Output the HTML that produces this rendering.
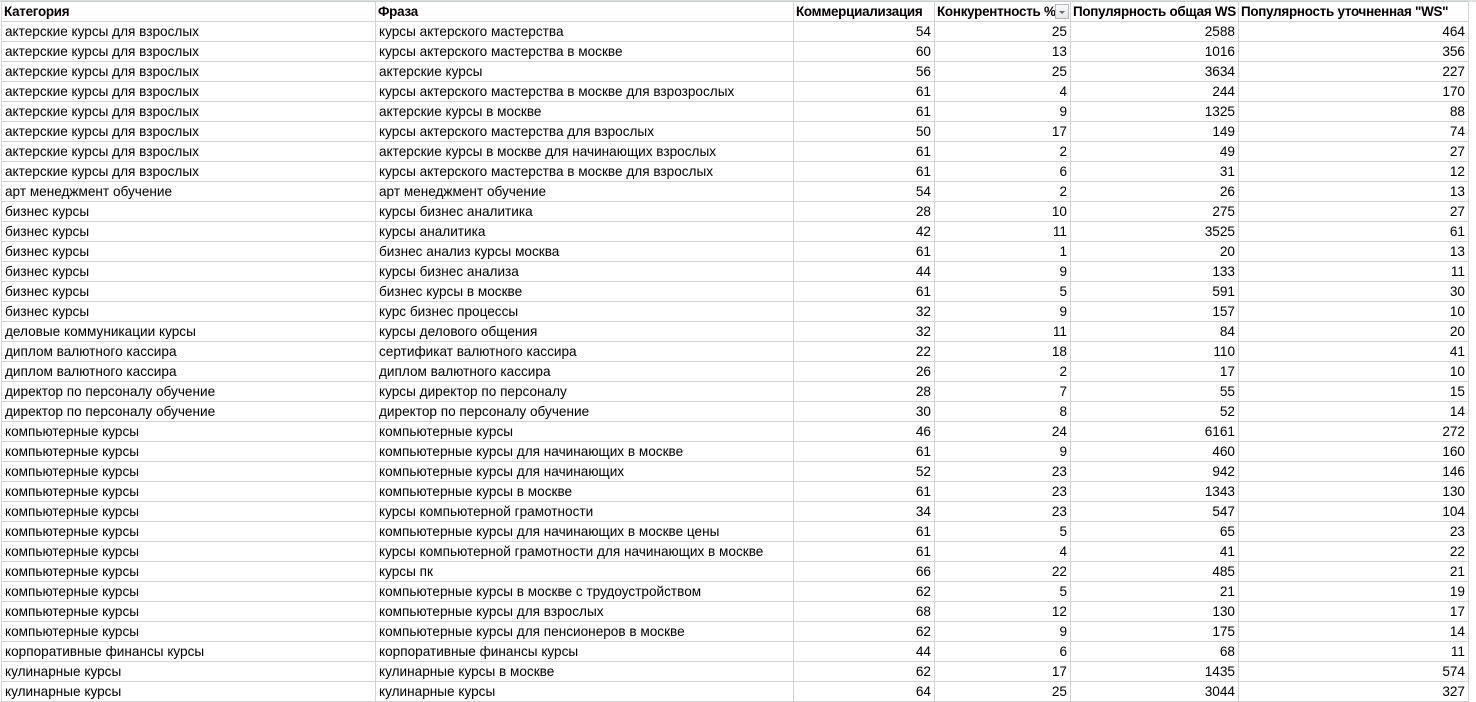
<!DOCTYPE html>
<html><head><meta charset="utf-8"><style>
body{margin:0;background:#fff;width:1476px;height:699px;overflow:hidden;position:relative;font-family:"Liberation Sans",Arial,sans-serif;font-size:13.6px;color:#000}
.top{position:absolute;left:0;top:0;width:1476px;height:2px;background:#dde1e6}
table{position:absolute;left:1px;top:1px;border-collapse:collapse;table-layout:fixed;width:1467px}
td{border:1px solid #d4d4d4;height:19px;padding:0 3px;white-space:nowrap;overflow:hidden;line-height:19px}
tr:first-child td{font-weight:bold;font-size:13.4px;letter-spacing:-0.25px;border-top-color:#c9cdd3;position:relative;padding:0 2px}
td.n{text-align:right}
.dd{position:absolute;right:1px;top:2px;width:14px;height:15px;border:1px solid #b8bcc2;background:linear-gradient(#fafafa,#e4e6ea);box-sizing:border-box}
.dd:after{content:"";position:absolute;left:3px;top:6px;border-left:3px solid transparent;border-right:3px solid transparent;border-top:3px solid #666}
</style></head><body>
<div class="top"></div>
<table>
<colgroup><col style="width:374px"><col style="width:418px"><col style="width:141px"><col style="width:136px"><col style="width:168px"><col style="width:230px"></colgroup>
<tr><td>Категория</td><td>Фраза</td><td>Коммерциализация</td><td>Конкурентность %<span class="dd"></span></td><td>Популярность общая WS</td><td>Популярность уточненная "WS"</td></tr>
<tr><td>актерские курсы для взрослых</td><td>курсы актерского мастерства</td><td class="n">54</td><td class="n">25</td><td class="n">2588</td><td class="n">464</td></tr>
<tr><td>актерские курсы для взрослых</td><td>курсы актерского мастерства в москве</td><td class="n">60</td><td class="n">13</td><td class="n">1016</td><td class="n">356</td></tr>
<tr><td>актерские курсы для взрослых</td><td>актерские курсы</td><td class="n">56</td><td class="n">25</td><td class="n">3634</td><td class="n">227</td></tr>
<tr><td>актерские курсы для взрослых</td><td>курсы актерского мастерства в москве для взрозрослых</td><td class="n">61</td><td class="n">4</td><td class="n">244</td><td class="n">170</td></tr>
<tr><td>актерские курсы для взрослых</td><td>актерские курсы в москве</td><td class="n">61</td><td class="n">9</td><td class="n">1325</td><td class="n">88</td></tr>
<tr><td>актерские курсы для взрослых</td><td>курсы актерского мастерства для взрослых</td><td class="n">50</td><td class="n">17</td><td class="n">149</td><td class="n">74</td></tr>
<tr><td>актерские курсы для взрослых</td><td>актерские курсы в москве для начинающих взрослых</td><td class="n">61</td><td class="n">2</td><td class="n">49</td><td class="n">27</td></tr>
<tr><td>актерские курсы для взрослых</td><td>курсы актерского мастерства в москве для взрослых</td><td class="n">61</td><td class="n">6</td><td class="n">31</td><td class="n">12</td></tr>
<tr><td>арт менеджмент обучение</td><td>арт менеджмент обучение</td><td class="n">54</td><td class="n">2</td><td class="n">26</td><td class="n">13</td></tr>
<tr><td>бизнес курсы</td><td>курсы бизнес аналитика</td><td class="n">28</td><td class="n">10</td><td class="n">275</td><td class="n">27</td></tr>
<tr><td>бизнес курсы</td><td>курсы аналитика</td><td class="n">42</td><td class="n">11</td><td class="n">3525</td><td class="n">61</td></tr>
<tr><td>бизнес курсы</td><td>бизнес анализ курсы москва</td><td class="n">61</td><td class="n">1</td><td class="n">20</td><td class="n">13</td></tr>
<tr><td>бизнес курсы</td><td>курсы бизнес анализа</td><td class="n">44</td><td class="n">9</td><td class="n">133</td><td class="n">11</td></tr>
<tr><td>бизнес курсы</td><td>бизнес курсы в москве</td><td class="n">61</td><td class="n">5</td><td class="n">591</td><td class="n">30</td></tr>
<tr><td>бизнес курсы</td><td>курс бизнес процессы</td><td class="n">32</td><td class="n">9</td><td class="n">157</td><td class="n">10</td></tr>
<tr><td>деловые коммуникации курсы</td><td>курсы делового общения</td><td class="n">32</td><td class="n">11</td><td class="n">84</td><td class="n">20</td></tr>
<tr><td>диплом валютного кассира</td><td>сертификат валютного кассира</td><td class="n">22</td><td class="n">18</td><td class="n">110</td><td class="n">41</td></tr>
<tr><td>диплом валютного кассира</td><td>диплом валютного кассира</td><td class="n">26</td><td class="n">2</td><td class="n">17</td><td class="n">10</td></tr>
<tr><td>директор по персоналу обучение</td><td>курсы директор по персоналу</td><td class="n">28</td><td class="n">7</td><td class="n">55</td><td class="n">15</td></tr>
<tr><td>директор по персоналу обучение</td><td>директор по персоналу обучение</td><td class="n">30</td><td class="n">8</td><td class="n">52</td><td class="n">14</td></tr>
<tr><td>компьютерные курсы</td><td>компьютерные курсы</td><td class="n">46</td><td class="n">24</td><td class="n">6161</td><td class="n">272</td></tr>
<tr><td>компьютерные курсы</td><td>компьютерные курсы для начинающих в москве</td><td class="n">61</td><td class="n">9</td><td class="n">460</td><td class="n">160</td></tr>
<tr><td>компьютерные курсы</td><td>компьютерные курсы для начинающих</td><td class="n">52</td><td class="n">23</td><td class="n">942</td><td class="n">146</td></tr>
<tr><td>компьютерные курсы</td><td>компьютерные курсы в москве</td><td class="n">61</td><td class="n">23</td><td class="n">1343</td><td class="n">130</td></tr>
<tr><td>компьютерные курсы</td><td>курсы компьютерной грамотности</td><td class="n">34</td><td class="n">23</td><td class="n">547</td><td class="n">104</td></tr>
<tr><td>компьютерные курсы</td><td>компьютерные курсы для начинающих в москве цены</td><td class="n">61</td><td class="n">5</td><td class="n">65</td><td class="n">23</td></tr>
<tr><td>компьютерные курсы</td><td>курсы компьютерной грамотности для начинающих в москве</td><td class="n">61</td><td class="n">4</td><td class="n">41</td><td class="n">22</td></tr>
<tr><td>компьютерные курсы</td><td>курсы пк</td><td class="n">66</td><td class="n">22</td><td class="n">485</td><td class="n">21</td></tr>
<tr><td>компьютерные курсы</td><td>компьютерные курсы в москве с трудоустройством</td><td class="n">62</td><td class="n">5</td><td class="n">21</td><td class="n">19</td></tr>
<tr><td>компьютерные курсы</td><td>компьютерные курсы для взрослых</td><td class="n">68</td><td class="n">12</td><td class="n">130</td><td class="n">17</td></tr>
<tr><td>компьютерные курсы</td><td>компьютерные курсы для пенсионеров в москве</td><td class="n">62</td><td class="n">9</td><td class="n">175</td><td class="n">14</td></tr>
<tr><td>корпоративные финансы курсы</td><td>корпоративные финансы курсы</td><td class="n">44</td><td class="n">6</td><td class="n">68</td><td class="n">11</td></tr>
<tr><td>кулинарные курсы</td><td>кулинарные курсы в москве</td><td class="n">62</td><td class="n">17</td><td class="n">1435</td><td class="n">574</td></tr>
<tr><td>кулинарные курсы</td><td>кулинарные курсы</td><td class="n">64</td><td class="n">25</td><td class="n">3044</td><td class="n">327</td></tr>
</table>
</body></html>
